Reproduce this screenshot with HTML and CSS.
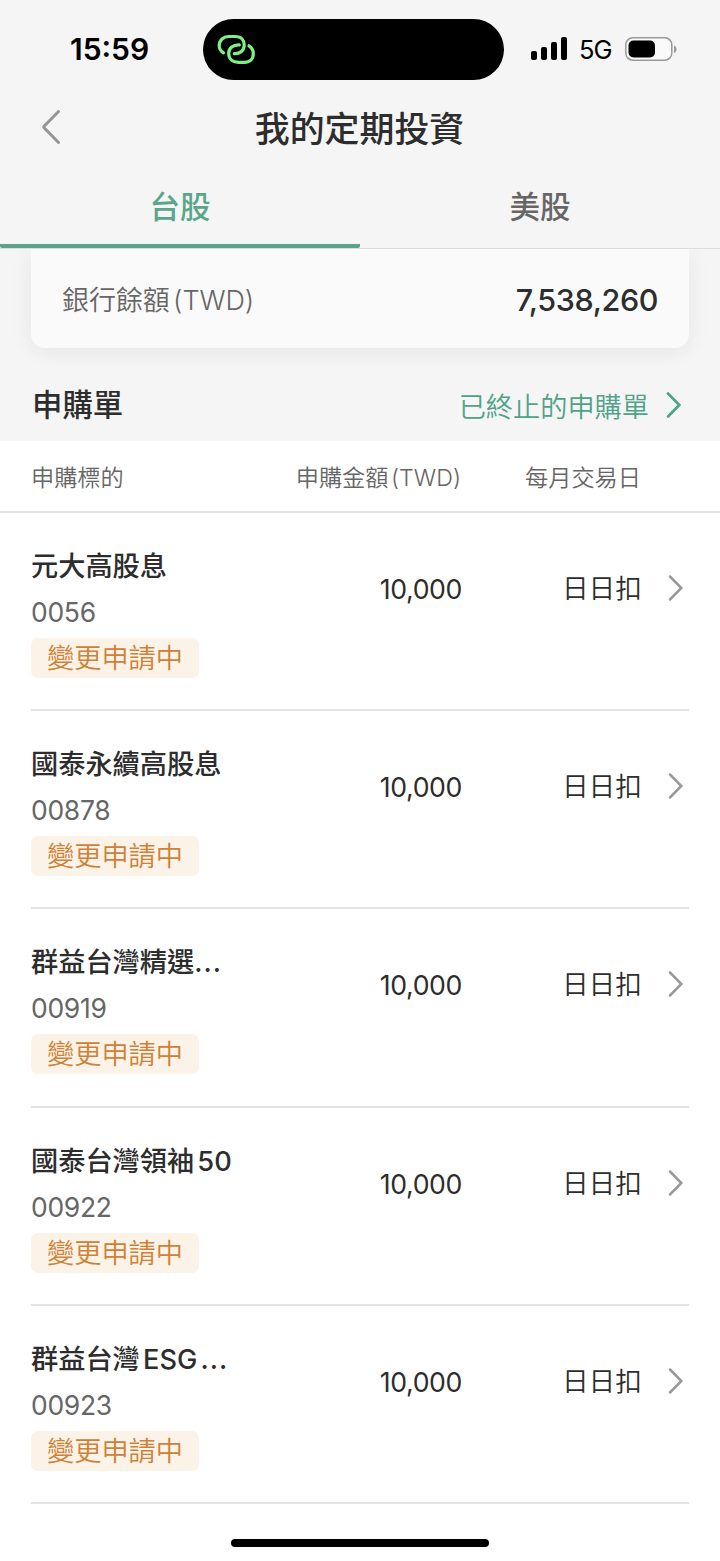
FILE: index.html
```html
<!DOCTYPE html>
<html lang="zh-Hant">

<head>
    <meta charset="UTF-8">
    <meta name="viewport" content="width=device-width, initial-scale=1.0">
    <title>我的定期投資</title>
    <link rel="stylesheet" href="styles.css">
</head>

<body>
    <div class="status-bar">
        <span class="time">15:59</span>
        <div class="island">
            <svg width="40" height="32" viewBox="0 0 40 32">
                <path class="link" d="M22.3 10.8C16 10.5 11.7 14 11.7 19.2C11.7 25 16 28.3 21.5 28.3H27.5C33 28.3 36.3 25 36.3 19.5C36.3 16 34.8 13.5 32 11.8" />
                <path class="link" d="M6.5 18.8C3.7 17 2.2 15 2.2 12C2.2 6 6.5 2.5 12 2.5H18.5C24 2.5 27.2 6 27.2 11C27.2 16.5 23 20 17.3 19.7" />
            </svg>
        </div>
        <div class="signals">
            <svg width="38" height="24" viewBox="0 0 38 24">
                <rect x="0" y="14" width="6" height="9" rx="2" />
                <rect x="10" y="10" width="6" height="13" rx="2" />
                <rect x="20" y="5" width="6" height="18" rx="2" />
                <rect x="30" y="0" width="6" height="23" rx="2" />
            </svg>
            <span class="network">5G</span>
            <svg width="52" height="24" viewBox="0 0 52 24">
                <rect x="0.8" y="0.8" width="46" height="22.4" rx="7" fill="#fafafa" stroke="#999" stroke-width="1.5" />
                <rect x="3.5" y="3.5" width="26.5" height="17" rx="5" />
                <path d="M49 8.5C52.3 9.5 52.3 15 49 16Z" fill="#999" />
            </svg>
        </div>
    </div>

    <header>
        <svg class="back" width="20" height="36" viewBox="0 0 20 36"><path d="M17.5 2.5L3.3 17Q2.3 18 3.3 19L17.5 33.5" /></svg>
        <h1>我的定期投資</h1>
    </header>

    <div class="tabs">
        <a class="tab active">台股</a>
        <a class="tab">美股</a>
    </div>

    <div class="summary">
        <div class="balance-card">
            <span class="label">銀行餘額 (TWD)</span>
            <span class="balance">7,538,260</span>
        </div>
    </div>

    <div class="section-title">
        <h2>申購單</h2>
        <a class="ended">已終止的申購單
            <svg width="16" height="28" viewBox="0 0 16 28"><path d="M2 2.5L13.3 14L2 25.5" /></svg>
        </a>
    </div>

    <div class="list-head">
        <span>申購標的</span>
        <span class="col-amount">申購金額 (TWD)</span>
        <span class="col-day">每月交易日</span>
    </div>

    <ul id="order-list"></ul>

    <div class="home-indicator"></div>

    <script>
        const orders = [
            { name: '元大高股息', code: '0056' },
            { name: '國泰永續高股息', code: '00878' },
            { name: '群益台灣精選<span class="dots">...</span>', code: '00919' },
            { name: '國泰台灣領袖 50', code: '00922' },
            { name: '群益台灣 ESG <span class="dots">...</span>', code: '00923' }
        ];

        const orderList = document.getElementById('order-list');
        orders.forEach(order => {
            const row = document.createElement('li');
            row.innerHTML = `
                <div class="stock">
                    <span class="name">${order.name}</span>
                    <span class="code">${order.code}</span>
                    <span class="badge">變更申請中</span>
                </div>
                <span class="amount">10,000</span>
                <span class="day">日日扣</span>
                <svg class="arrow" width="16" height="28" viewBox="0 0 16 28"><path d="M2 2.5L13.3 14L2 25.5" /></svg>
            `;
            orderList.appendChild(row);
        });
    </script>
</body>

</html>
```

FILE: styles.css
```css
* {
    box-sizing: border-box;
}

body {
    margin: 0;
    height: 1561px;
    overflow: hidden;
    background-color: #fff;
    color: #2d2d2d;
    font-family: Inter, "Noto Sans CJK TC", sans-serif;
}

svg {
    display: block;
    flex: none;
}

.status-bar {
    height: 98px;
    padding: 19px 43px 0 70px;
    display: flex;
    background-color: #f5f5f5;
    color: #000;
}

.time {
    width: 133px;
    line-height: 61px;
    font-size: 30px;
    font-weight: 600;
}

.island {
    width: 301px;
    height: 61px;
    padding: 15px 14px;
    border-radius: 31px;
    background-color: #000;
}

.link {
    fill: none;
    stroke: #7df281;
    stroke-width: 3.2;
    stroke-linecap: round;
}

.signals {
    flex: 1;
    height: 59px;
    padding-left: 27px;
    display: flex;
    align-items: center;
}

.network {
    width: 45px;
    padding: 2px 0 0 10px;
    margin-right: 11px;
    font-size: 25.5px;
    letter-spacing: -1px;
}

header {
    height: 70px;
    display: flex;
    align-items: center;
    padding: 0 41px 12px;
    background-color: #f5f5f5;
}

header .back {
    fill: none;
    stroke: #959595;
    stroke-width: 3;
    stroke-linecap: round;
}

h1 {
    flex: 1;
    margin: 3px 21px 0 0;
    text-align: center;
    font-size: 34.9px;
    font-weight: 500;
    line-height: 50px;
}

.tabs {
    display: flex;
    height: 81px;
    background-color: #f5f5f5;
    border-bottom: 1px solid #dcdcdc;
}

.tab {
    flex: 1;
    height: 80px;
    text-align: center;
    line-height: 78px;
    font-size: 30.5px;
    font-weight: 500;
    color: #666;
}

.tab.active {
    color: #5aa68c;
    border-bottom: 4px solid #5aa38b;
    border-radius: 2px;
}

.summary {
    height: 121px;
    padding: 0 31px;
    overflow: hidden;
    background-color: #f5f5f5;
}

.balance-card {
    height: 99px;
    padding: 0 31px;
    display: flex;
    align-items: center;
    justify-content: space-between;
    border-radius: 0 0 14px 14px;
    background-color: #fafafa;
    box-shadow: 0 4px 22px rgba(0, 0, 0, 0.07);
}

.label {
    color: #666;
    font-size: 27px;
    font-weight: 350;
    letter-spacing: -0.1px;
    word-spacing: -4px;
}

.balance {
    padding-top: 2px;
    font-size: 30.5px;
    font-weight: 500;
    letter-spacing: -0.4px;
}

.section-title {
    height: 71px;
    padding: 0 38px 0 32px;
    display: flex;
    align-items: center;
    justify-content: space-between;
    background-color: #f5f5f5;
}

h2 {
    margin: -5px 0 0;
    font-size: 30.4px;
    font-weight: 500;
}

.ended {
    display: flex;
    align-items: center;
    gap: 17px;
    margin-top: -2px;
    color: #50a288;
    font-size: 27.2px;
    font-weight: 350;
}

.ended path {
    fill: none;
    stroke: #50a288;
    stroke-width: 2.7;
    stroke-linecap: round;
}

.list-head {
    height: 72px;
    padding: 0 79px 0 31px;
    display: flex;
    align-items: center;
    border-bottom: 2px solid #e3e3e3;
    color: #666;
    font-size: 23.2px;
    font-weight: 350;
}

.col-amount {
    margin-left: auto;
    word-spacing: -4px;
}

.col-day {
    width: 180px;
    text-align: right;
}

#order-list {
    margin: 0;
    padding: 0 31px;
    list-style: none;
}

#order-list li {
    height: 198.2px;
    display: flex;
    align-items: flex-start;
    border-bottom: 2px solid #e3e3e3;
}

.stock {
    width: 230px;
    padding-top: 31px;
    display: flex;
    flex-direction: column;
    align-items: flex-start;
}

.name {
    font-size: 27.2px;
    font-weight: 500;
    line-height: 46px;
    white-space: pre;
    word-spacing: -4px;
}

.dots {
    letter-spacing: 1px;
}

.code {
    font-size: 26.5px;
    line-height: 44px;
    letter-spacing: -0.3px;
    color: #666;
}

.badge {
    width: 168px;
    height: 40px;
    margin-top: 4px;
    border-radius: 7px;
    background-color: #fcf3e8;
    color: #cf8136;
    font-size: 27.2px;
    font-weight: 350;
    line-height: 42px;
    text-align: center;
}

.amount {
    width: 201px;
    margin-top: 56px;
    line-height: 40px;
    font-size: 26.7px;
    letter-spacing: -0.4px;
    text-align: right;
}

.day {
    width: 180px;
    margin-top: 55px;
    line-height: 40px;
    font-size: 26.7px;
    font-weight: 350;
    text-align: right;
}

.arrow {
    margin: 61px 0 0 26px;
}

.arrow path {
    fill: none;
    stroke: #999;
    stroke-width: 2.5;
    stroke-linecap: round;
}

.home-indicator {
    width: 258px;
    height: 8px;
    margin: 35px auto 0;
    border-radius: 4px;
    background-color: #000;
}
```
